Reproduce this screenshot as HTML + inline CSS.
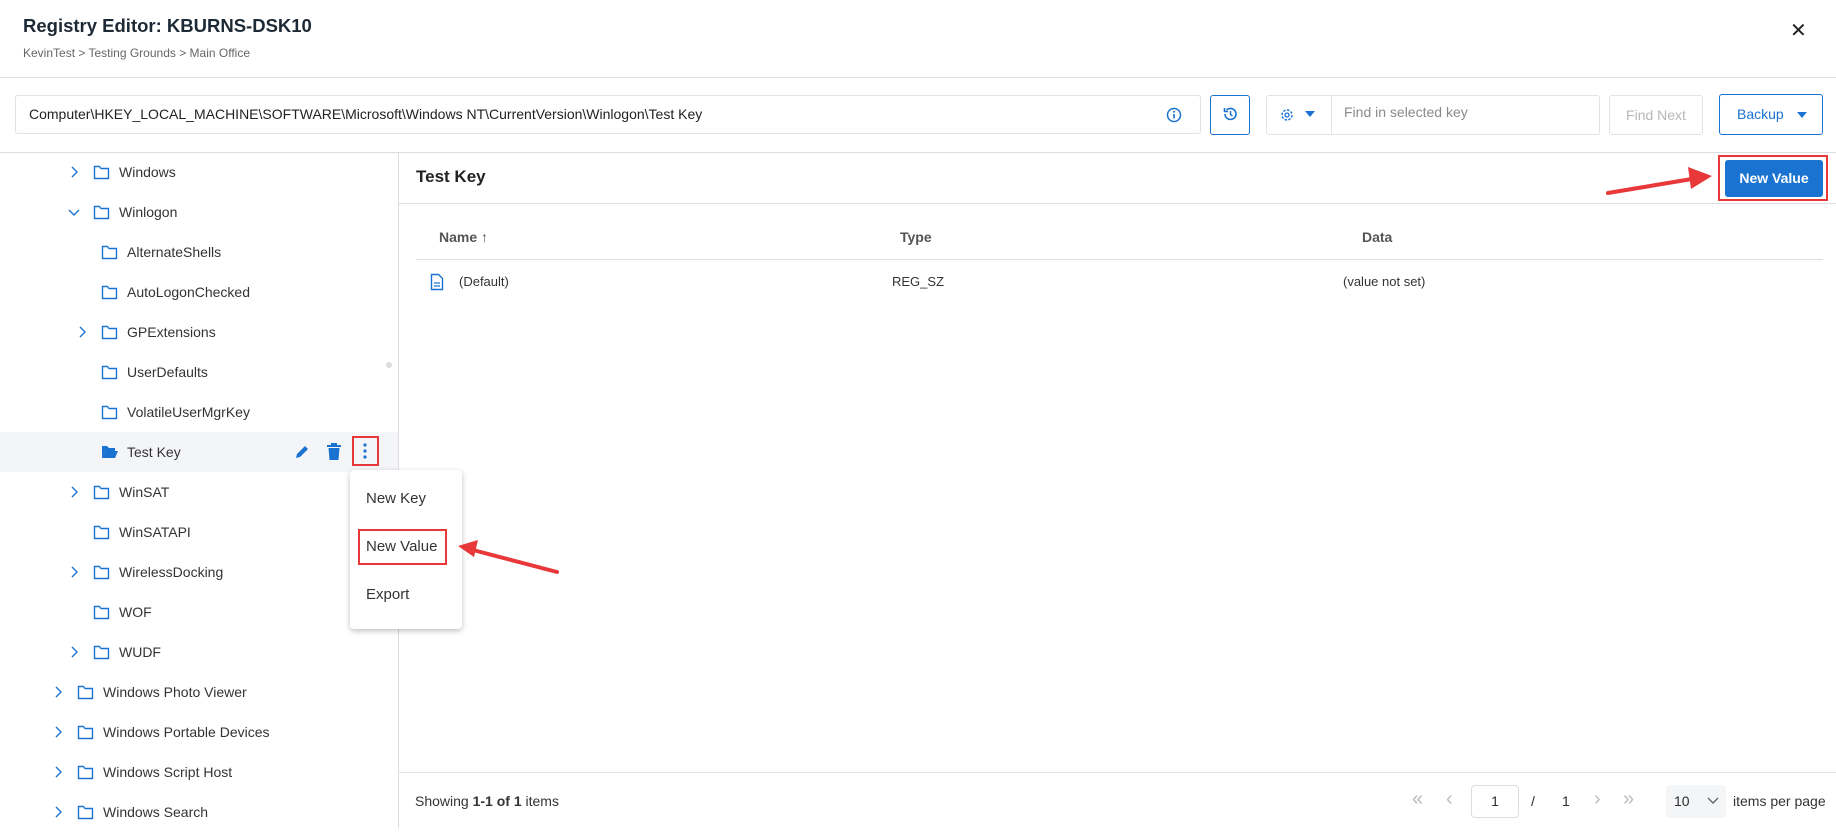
<!DOCTYPE html>
<html><head><meta charset="utf-8"><style>
*{box-sizing:border-box;margin:0;padding:0}
body{width:1836px;height:828px;overflow:hidden;background:#fff;font-family:"Liberation Sans",sans-serif;color:#2b2b2b;position:relative;font-size:15px}
.a{position:absolute;white-space:nowrap}
.tr{position:absolute;height:40px;line-height:40px;font-size:14px;color:#333}
svg{position:absolute}
</style></head><body>
<div class="a" style="left:23px;top:15px;font-size:18.5px;font-weight:bold;color:#1d2a35">Registry Editor: KBURNS-DSK10</div>
<div class="a" style="left:23px;top:46px;font-size:12px;color:#666">KevinTest &gt; Testing Grounds &gt; Main Office</div>
<div class="a" style="left:1790px;top:18px;font-size:20px;color:#222">✕</div>
<div class="a" style="left:0;top:77px;width:1836px;border-top:1px solid #ddd"></div>

<div class="a" style="left:15px;top:95px;width:1186px;height:39px;border:1px solid #e3e3e3;border-radius:3px;padding-left:13px;line-height:37px;font-size:14px;color:#222">Computer\HKEY_LOCAL_MACHINE\SOFTWARE\Microsoft\Windows NT\CurrentVersion\Winlogon\Test Key</div>
<svg style="left:1166px;top:107px" width="16" height="16" viewBox="0 0 16 16"><circle cx="8" cy="8" r="6.5" fill="none" stroke="#1a73d1" stroke-width="1.5"/><rect x="7.2" y="7" width="1.6" height="4.5" fill="#1a73d1"/><circle cx="8" cy="4.8" r="1" fill="#1a73d1"/></svg>
<div class="a" style="left:1210px;top:95px;width:40px;height:40px;border:1px solid #1a73d1;border-radius:3px"></div>
<svg style="left:1221px;top:105px" width="18" height="18" viewBox="0 0 18 18"><path d="M4 9a5.5 5.5 0 1 0 1.6-3.9" fill="none" stroke="#1a73d1" stroke-width="1.6"/><path d="M3.5 3v3.5H7" fill="none" stroke="#1a73d1" stroke-width="1.6"/><path d="M9.5 6v3.5l2 1.5" fill="none" stroke="#1a73d1" stroke-width="1.5"/></svg>
<div class="a" style="left:1266px;top:95px;width:334px;height:40px;border:1px solid #e3e3e3;border-radius:3px"></div>
<div class="a" style="left:1331px;top:95px;height:40px;border-left:1px solid #e3e3e3"></div>
<svg style="left:1279px;top:107px" width="16" height="16" viewBox="0 0 16 16"><circle cx="8" cy="8" r="5" fill="none" stroke="#1a73d1" stroke-width="1.4" stroke-dasharray="2.5 1.4"/><circle cx="8" cy="8" r="2" fill="none" stroke="#1a73d1" stroke-width="1.3"/></svg>
<svg style="left:1305px;top:110px" width="10" height="8"><path d="M0 1h10L5 7z" fill="#1a73d1"/></svg>
<div class="a" style="left:1344px;top:104px;font-size:14px;color:#8a8a8a">Find in selected key</div>
<div class="a" style="left:1609px;top:95px;width:94px;height:40px;border:1px solid #e3e3e3;border-radius:3px;text-align:center;line-height:38px;font-size:14px;color:#b8b8b8">Find Next</div>
<div class="a" style="left:1719px;top:94px;width:104px;height:41px;border:1px solid #1a73d1;border-radius:3px;line-height:39px;padding-left:17px;font-size:14px;color:#1a73d1">Backup</div>
<svg style="left:1797px;top:111px" width="10" height="8"><path d="M0 1h10L5 7z" fill="#1a73d1"/></svg>
<div class="a" style="left:0;top:152px;width:1836px;border-top:1px solid #ddd"></div>
<div class="a" style="left:398px;top:152px;height:676px;border-left:1px solid #ddd"></div>

<div class="a" style="left:0;top:432px;width:398px;height:40px;background:#f4f5f8"></div>
<div id="tree"></div>
<div class="a" style="left:386px;top:362px;width:6px;height:6px;border-radius:3px;background:#ddd"></div>
<svg style="left:293px;top:443px" width="18" height="18" viewBox="0 0 18 18"><path d="M3 15l1-4 8-8 3 3-8 8z" fill="#1a73d1"/></svg>
<svg style="left:326px;top:443px" width="16" height="18" viewBox="0 0 16 18"><rect x="1" y="2" width="14" height="2" fill="#1a73d1"/><rect x="5" y="0" width="6" height="2" fill="#1a73d1"/><path d="M2.5 5h11l-1 12h-9z" fill="#1a73d1"/></svg>
<div class="a" style="left:352px;top:436px;width:27px;height:30px;border:2px solid #e8383a"></div>
<svg style="left:363px;top:442px" width="4" height="18"><circle cx="2" cy="3" r="1.6" fill="#1a73d1"/><circle cx="2" cy="9" r="1.6" fill="#1a73d1"/><circle cx="2" cy="15" r="1.6" fill="#1a73d1"/></svg>

<div class="a" style="left:350px;top:470px;width:112px;height:159px;background:#fff;border-radius:4px;box-shadow:0 2px 6px rgba(0,0,0,.25)"></div>
<div class="a" style="left:366px;top:490px;font-size:15px;color:#333">New Key</div>
<div class="a" style="left:366px;top:538px;font-size:15px;color:#333">New Value</div>
<div class="a" style="left:366px;top:586px;font-size:15px;color:#333">Export</div>
<div class="a" style="left:358px;top:529px;width:89px;height:36px;border:2px solid #e8383a"></div>
<svg style="left:455px;top:535px" width="110" height="45"><line x1="102" y1="37" x2="18" y2="15" stroke="#e8383a" stroke-width="4" stroke-linecap="round"/><path d="M3 11l20-6-4 17z" fill="#e8383a"/></svg>

<div class="a" style="left:416px;top:167px;font-size:17px;font-weight:bold;color:#222">Test Key</div>
<div class="a" style="left:398px;top:203px;width:1438px;border-top:1px solid #ddd"></div>
<div class="a" style="left:1718px;top:155px;width:110px;height:46px;border:2px solid #e8383a"></div>
<div class="a" style="left:1725px;top:160px;width:98px;height:37px;background:#1a73d1;border-radius:3px;color:#fff;font-weight:bold;font-size:14px;text-align:center;line-height:37px">New Value</div>
<svg style="left:1600px;top:165px" width="118" height="40"><line x1="8" y1="28" x2="92" y2="14" stroke="#e8383a" stroke-width="4" stroke-linecap="round"/><path d="M112 11l-24-9 3 22z" fill="#e8383a"/></svg>
<div class="a" style="left:439px;top:229px;font-size:14px;font-weight:bold;color:#555">Name ↑</div>
<div class="a" style="left:900px;top:229px;font-size:14px;font-weight:bold;color:#555">Type</div>
<div class="a" style="left:1362px;top:229px;font-size:14px;font-weight:bold;color:#555">Data</div>
<div class="a" style="left:416px;top:259px;width:1407px;border-top:1px solid #ddd"></div>
<svg style="left:430px;top:273px" width="14" height="18" viewBox="0 0 14 18"><path d="M1.5 1.5h7l4 4v11h-11z" fill="none" stroke="#1a73d1" stroke-width="1.4"/><path d="M4 10h6M4 13h6" stroke="#1a73d1" stroke-width="1.3"/></svg>
<div class="a" style="left:459px;top:274px;font-size:13px;color:#333">(Default)</div>
<div class="a" style="left:892px;top:274px;font-size:13px;color:#333">REG_SZ</div>
<div class="a" style="left:1343px;top:274px;font-size:13px;color:#333">(value not set)</div>

<div class="a" style="left:398px;top:772px;width:1438px;border-top:1px solid #e3e3e3"></div>
<div class="a" style="left:415px;top:793px;font-size:14px;color:#333">Showing <b>1-1 of 1</b> items</div>
<div class="a" style="left:1412px;top:788px;font-size:20px;color:#bbb">«</div>
<div class="a" style="left:1446px;top:788px;font-size:20px;color:#bbb">‹</div>
<div class="a" style="left:1471px;top:785px;width:48px;height:33px;border:1px solid #ddd;border-radius:4px;text-align:center;line-height:31px;font-size:14px">1</div>
<div class="a" style="left:1531px;top:793px;font-size:14px">/</div>
<div class="a" style="left:1562px;top:793px;font-size:14px">1</div>
<div class="a" style="left:1594px;top:788px;font-size:20px;color:#bbb">›</div>
<div class="a" style="left:1623px;top:788px;font-size:20px;color:#bbb">»</div>
<div class="a" style="left:1666px;top:785px;width:60px;height:33px;background:#f4f5f7;border-radius:4px;padding-left:8px;line-height:33px;font-size:14px">10</div>
<svg style="left:1707px;top:797px" width="12" height="8"><path d="M1 1l5 5 5-5" fill="none" stroke="#666" stroke-width="1.4"/></svg>
<div class="a" style="left:1733px;top:793px;font-size:14px;color:#333">items per page</div>

<script>
var rows=[["Windows",74,1],["Winlogon",74,2],["AlternateShells",82,0],["AutoLogonChecked",82,0],["GPExtensions",82,1],["UserDefaults",82,0],["VolatileUserMgrKey",82,0],["Test Key",82,3],["WinSAT",74,1],["WinSATAPI",74,0],["WirelessDocking",74,1],["WOF",74,0],["WUDF",74,1],["Windows Photo Viewer",58,1],["Windows Portable Devices",58,1],["Windows Script Host",58,1],["Windows Search",58,1]];
var h="";rows.forEach(function(r,i){var y=152+i*40,x=r[1];
if(r[2]==1)h+='<svg style="left:'+(x-4)+'px;top:'+(y+14)+'px" width="10" height="12"><path d="M2 1l5 5-5 5" fill="none" stroke="#1a73d1" stroke-width="1.4"/></svg>';
if(r[2]==2)h+='<svg style="left:'+(x-6)+'px;top:'+(y+17)+'px" width="12" height="8"><path d="M1 1l5 5 5-5" fill="none" stroke="#1a73d1" stroke-width="1.4"/></svg>';
var fx=x+19;
if(r[2]==3)h+='<svg style="left:'+fx+'px;top:'+(y+13)+'px" width="18" height="14" viewBox="0 0 18 14"><path d="M1 1h5l2 2h6v3H4L1 13z" fill="#1a73d1"/><path d="M4 6h13l-3 7H1z" fill="#1a73d1"/></svg>';
else h+='<svg style="left:'+fx+'px;top:'+(y+13)+'px" width="17" height="15" viewBox="0 0 17 15"><path d="M1.5 1.5h5l1.5 2h7.5v10h-14z" fill="none" stroke="#1a73d1" stroke-width="1.4" stroke-linejoin="round"/></svg>';
h+='<div class="tr" style="left:'+(x+45)+'px;top:'+y+'px">'+r[0]+'</div>';});
document.getElementById("tree").innerHTML=h;
</script>
</body></html>
